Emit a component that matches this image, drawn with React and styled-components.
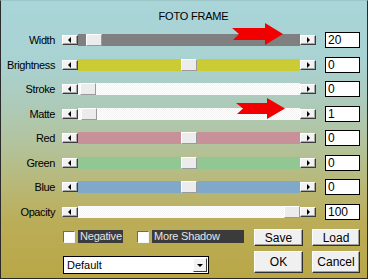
import React from 'react'
import styled, { createGlobalStyle } from 'styled-components';

const GlobalStyle = createGlobalStyle`
    html, body {
        margin: 0;
        padding: 0;
        background: #b8a848;
    }
    * {
        box-sizing: border-box;
    }
`;

const Window = styled.div`
    width: 368px;
    height: 279px;
    border: 1px solid #2a2a2a;
    border-top-color: #9cc6c8;
    background: linear-gradient(#a9d5d9 0%, #a9d2d2 22%, #adcab8 38%, #b3c39c 52%, #b8b878 66%, #bbad58 80%, #b9a746 100%);
    font-family: "Liberation Sans", Arial, sans-serif;
    font-size: 11px;
    color: #000;
    overflow: hidden;
`;

const Title = styled.div`
    height: 14px;
    margin-top: 8px;
    margin-bottom: 5px;
    padding-left: 19px;
    text-align: center;
    line-height: 14px;
    letter-spacing: -0.2px;
`;

const Rows = styled.div`
    display: grid;
    grid-template-columns: 54px 254px 35px;
    grid-auto-rows: 24.5px;
    column-gap: 7px;
    align-items: center;
`;

const Label = styled.div`
    text-align: right;
    letter-spacing: -0.4px;
    white-space: nowrap;
`;

const Slider = styled.div`
    position: relative;
    display: flex;
    align-items: center;
    height: 12px;
`;

const ArrowButton = styled.div`
    width: 16px;
    height: 10px;
    flex: none;
    display: flex;
    align-items: center;
    justify-content: ${p => p.$dir === 'left' ? 'flex-start' : 'center'};
    padding-left: ${p => p.$dir === 'left' ? '5px' : '1px'};
    background: #f2f2f2;
    border: 1px solid;
    border-color: #ffffff #3c3c3c #3c3c3c #ffffff;
    box-shadow: inset -1px -1px #a8a8a8;

    &::before {
        content: '';
        border-top: 3px solid transparent;
        border-bottom: 3px solid transparent;
        ${p => p.$dir === 'left'
            ? 'border-right: 3px solid #000;'
            : 'border-left: 3px solid #000;'}
    }
`;

const Track = styled.div`
    position: relative;
    flex: 1;
    height: 12px;
    background: ${p => p.$color};
    ${p => p.$dither && `
        background-image: repeating-conic-gradient(#ffffff 0 25%, #f3f3f3 0 50%);
        background-size: 2px 2px;
    `}
`;

const Thumb = styled.div`
    position: absolute;
    top: 0;
    width: 16px;
    height: 12px;
    background: #ececec;
    border: 1px solid;
    border-color: #ffffff #9a9a9a #9a9a9a #ffffff;
`;

const ValueBox = styled.div`
    width: 35px;
    height: 16px;
    margin-left: 2px;
    padding-left: 2px;
    background: #fff;
    border: 1px solid #000;
    line-height: 14px;
    font-size: 12px;
`;

const Pointer = styled.svg`
    position: absolute;
    left: ${p => p.$left}px;
    top: ${p => p.$top}px;
`;

const Footer = styled.div`
    display: flex;
    margin-top: 5px;
    padding-left: 62px;
`;

const Options = styled.div`
    width: 191px;
    display: flex;
    flex-direction: column;
`;

const CheckRow = styled.div`
    display: flex;
    align-items: center;
    margin-top: 1px;
    height: 13px;
`;

const CheckBox = styled.div`
    width: 12px;
    height: 12px;
    flex: none;
    background: #fff;
    border: 1px solid;
    border-color: #6a6a6a #f4f4f4 #f4f4f4 #6a6a6a;
`;

const CheckLabel = styled.div`
    width: ${p => p.$w}px;
    height: 13px;
    margin-left: 3px;
    margin-right: ${p => p.$gap || 0}px;
    padding-left: 2px;
    background: #3b3b3b;
    color: #e6e6e6;
    line-height: 13px;
    letter-spacing: -0.2px;
    white-space: nowrap;
`;

const Select = styled.div`
    display: flex;
    align-items: center;
    width: 146px;
    height: 18px;
    margin-top: 13px;
    background: #fff;
    border: 1px solid #000;
    padding-left: 3px;
`;

const SelectText = styled.div`
    flex: 1;
    line-height: 16px;
`;

const DropButton = styled.div`
    width: 14px;
    height: 14px;
    margin-right: 1px;
    display: flex;
    align-items: center;
    justify-content: center;
    background: #f2f2f2;
    border: 1px solid;
    border-color: #ffffff #3c3c3c #3c3c3c #ffffff;

    &::before {
        content: '';
        border-left: 3px solid transparent;
        border-right: 3px solid transparent;
        border-top: 3px solid #000;
    }
`;

const Buttons = styled.div`
    display: grid;
    grid-template-columns: 49px 48px;
    grid-template-rows: 17px 22px;
    column-gap: 9px;
    row-gap: 5px;
`;

const Button = styled.button`
    margin: 0;
    padding: 0;
    font-family: "Liberation Sans", Arial, sans-serif;
    font-size: 12px;
    color: #000;
    background: #f0f0f0;
    border: 1px solid;
    border-color: #ffffff #303030 #303030 #ffffff;
    box-shadow: inset -1px -1px #a0a0a0;
`;

const sliders = [
    { name: 'Width', color: '#808080', pos: 8, value: '20', arrow: { left: 170, top: -11, w: 51, h: 22 } },
    { name: 'Brightness', color: '#cbcb34', pos: 103, value: '0' },
    { name: 'Stroke', dither: true, pos: 2, value: '0' },
    { name: 'Matte', dither: true, pos: 3, value: '1', arrow: { left: 174, top: -10, w: 49, h: 21 } },
    { name: 'Red', color: '#c8919a', pos: 103, value: '0' },
    { name: 'Green', color: '#91c793', pos: 103, value: '0' },
    { name: 'Blue', color: '#7fa8cb', pos: 103, value: '0' },
    { name: 'Opacity', dither: true, pos: 206, value: '100' },
];

function RedArrow({ left, top, w, h }) {
    const mid = h / 2;
    const head = w - 18;
    return (
        <Pointer $left={left} $top={top} width={w} height={h} viewBox={`0 0 ${w} ${h}`}>
            <polygon
                points={`0,5 ${head},5 ${head},0 ${w},${mid} ${head},${h} ${head},${h - 5} 1,${h - 5} 7,${mid}`}
                fill="#f20000"
            />
        </Pointer>
    );
}

export default function App() {
    return (
        <Window>
            <GlobalStyle />
            <Title>FOTO FRAME</Title>
            <Rows>
                {sliders.map(s => (
                    <React.Fragment key={s.name}>
                        <Label>{s.name}</Label>
                        <Slider>
                            <ArrowButton $dir="left" />
                            <Track $color={s.color || '#f6f6f6'} $dither={s.dither}>
                                <Thumb style={{ left: s.pos }} />
                            </Track>
                            <ArrowButton $dir="right" />
                            {s.arrow && <RedArrow {...s.arrow} />}
                        </Slider>
                        <ValueBox>{s.value}</ValueBox>
                    </React.Fragment>
                ))}
            </Rows>
            <Footer>
                <Options>
                    <CheckRow>
                        <CheckBox />
                        <CheckLabel $w={45} $gap={14}>Negative</CheckLabel>
                        <CheckBox />
                        <CheckLabel $w={92}>More Shadow</CheckLabel>
                    </CheckRow>
                    <Select>
                        <SelectText>Default</SelectText>
                        <DropButton />
                    </Select>
                </Options>
                <Buttons>
                    <Button>Save</Button>
                    <Button>Load</Button>
                    <Button>OK</Button>
                    <Button>Cancel</Button>
                </Buttons>
            </Footer>
        </Window>
    )
}
